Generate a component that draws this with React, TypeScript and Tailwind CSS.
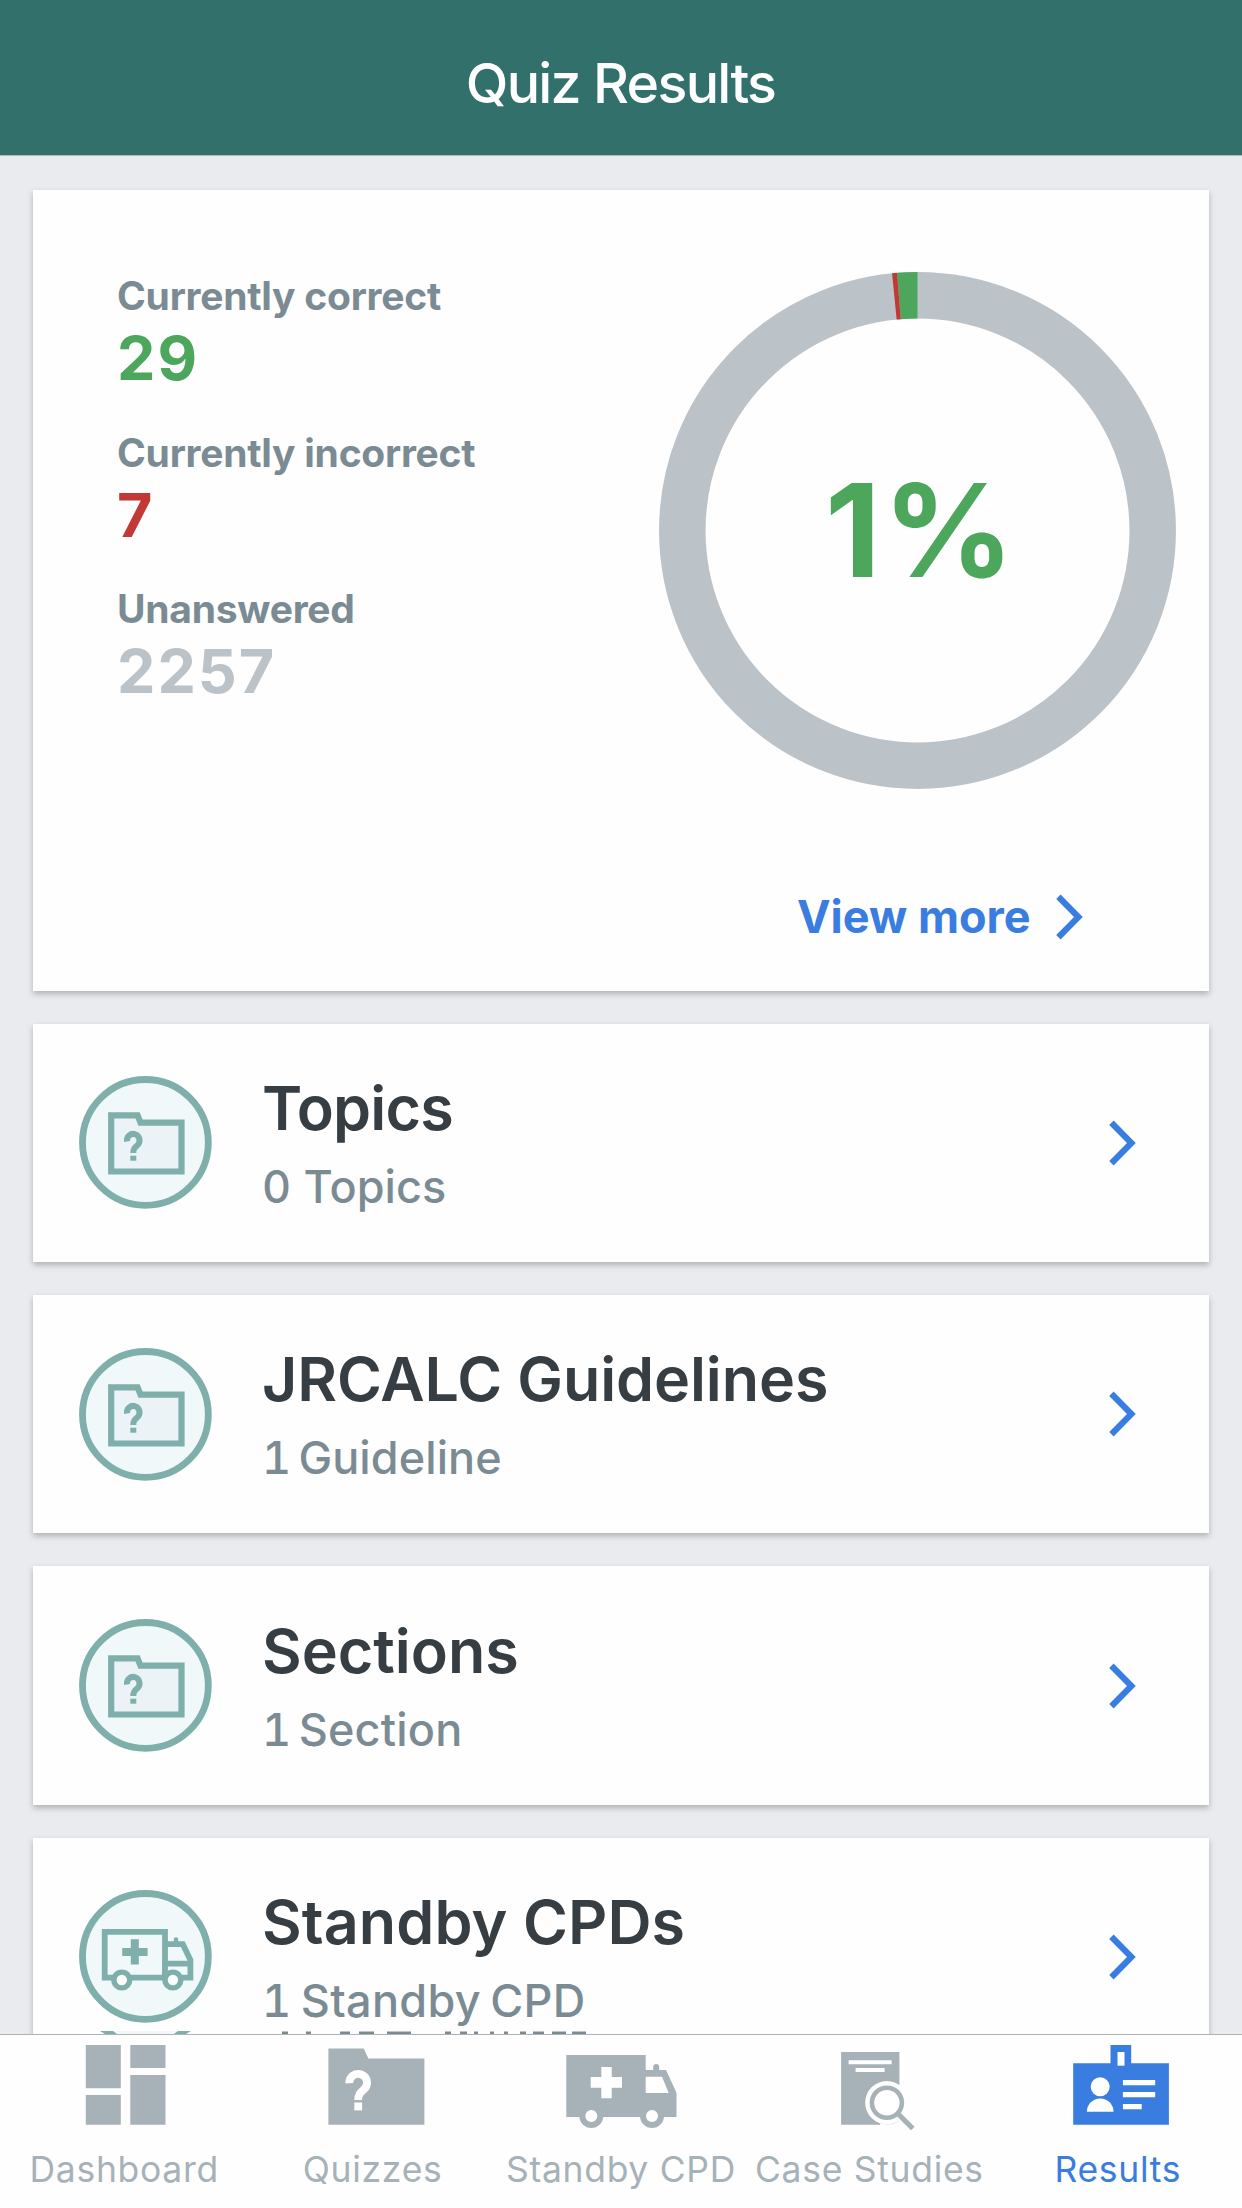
import type { ReactNode } from 'react'

interface Row {
  title: string
  titleClass: string
  count: string
  countClass: string
  icon: ReactNode
}

interface Tab {
  label: string
  active?: boolean
  icon: ReactNode
}

const FolderBadge = () => (
  <svg width="133" height="133" viewBox="0 0 133 133" fill="none" stroke="#7fafab">
    <circle cx="66.4" cy="66.4" r="62.9" fill="#f0f8f9" strokeWidth="6.8" />
    <path d="M32.2 39.4H58.6L61.5 46.7H102.5V95.5H32.2Z" fill="#ebf3f7" strokeWidth="6.2" />
    <path d="M48 65.5a6.3 6.5 0 1 1 10.6 3.6c-2.6 2.2-4.3 3.5-4.3 8" strokeWidth="6" />
    <path d="M54.3 79.7v5" strokeWidth="6" />
  </svg>
)

const AmbulanceBadge = () => (
  <svg width="133" height="133" viewBox="0 0 133 133" fill="none" stroke="#7fafab">
    <circle cx="66.4" cy="66.4" r="62.9" fill="#f0f8f9" strokeWidth="6.8" />
    <path d="M25.7 41.8H86V87.7H25.7Z" strokeWidth="5.8" />
    <path d="M86 54.2H103.8L111.4 70V87.7H86V73.6H111.4" fill="#f0f8f9" strokeWidth="5.8" />
    <path d="M97 54v-4.5" strokeWidth="4.4" strokeLinecap="round" />
    <path d="M43.2 62H68.6M55.8 49.3V74.6" strokeWidth="8" />
    <circle cx="42.8" cy="90" r="7.9" fill="#fff" strokeWidth="5.4" />
    <circle cx="93.9" cy="90" r="7.9" fill="#fff" strokeWidth="5.4" />
  </svg>
)

const Chevron = () => (
  <svg width="27" height="46" viewBox="0 0 27 46" fill="none" stroke="#3a7de1" strokeWidth="6.2">
    <path d="M2.4 2.8L22.4 23L2.4 43.2" />
  </svg>
)

const ROWS: Row[] = [
  { title: 'Topics', titleClass: 'tracking-[-0.8px]', count: '0 Topics', countClass: 'tracking-[0.1px]', icon: <FolderBadge /> },
  { title: 'JRCALC Guidelines', titleClass: 'tracking-[-0.1px]', count: '1 Guideline', countClass: 'tracking-[0.1px] [word-spacing:-5px]', icon: <FolderBadge /> },
  { title: 'Sections', titleClass: 'tracking-[0px]', count: '1 Section', countClass: 'tracking-[0.2px] [word-spacing:-5px]', icon: <FolderBadge /> },
  { title: 'Standby CPDs', titleClass: 'tracking-[0.1px]', count: '1 Standby CPD', countClass: 'tracking-[0.3px] [word-spacing:-3px]', icon: <AmbulanceBadge /> },
]

const STATS = [
  { label: 'Currently correct', value: 29, color: 'text-[#4ca75c]' },
  { label: 'Currently incorrect', value: 7, color: 'text-[#c23835]' },
  { label: 'Unanswered', value: 2257, color: 'text-[#bbc2c8]' },
]

const TABS: Tab[] = [
  {
    label: 'Dashboard',
    icon: (
      <path d="M23.8 5h35v43.3h-35zM23.8 55h35v29.7h-35zM68.3 5h35.2v23h-35.2zM68.3 35h35.2v49.7h-35.2z" />
    ),
  },
  {
    label: 'Quizzes',
    icon: (
      <>
        <path d="M17.4 8.6H52.7L57.4 18.4H113.4V84.7H17.4Z" />
        <g fill="none" stroke="#fff" strokeWidth="7.8">
          <path d="M38.3 43.3a8.9 8.8 0 1 1 14.6 6.2c-3.6 3.2-5.7 4.8-5.7 10.6" />
          <path d="M47.2 62.5v7.9" />
        </g>
      </>
    ),
  },
  {
    label: 'Standby CPD',
    icon: (
      <>
        <path d="M7.3 15H86.7V30H107L117.5 52.7V77H7.3Z" />
        <path d="M97.2 32v-5" stroke="currentColor" strokeWidth="6" strokeLinecap="round" />
        <path d="M86.7 36.7H103L109.7 53H86.7Z" fill="#fff" />
        <path d="M42.3 27h10.4v10h10.3v10.7h-10.3v10.6h-10.4v-10.6h-10.6v-10.7h10.6z" fill="#fff" />
        <circle cx="32.3" cy="76" r="9" fill="#fff" stroke="currentColor" strokeWidth="6" />
        <circle cx="93" cy="76" r="9" fill="#fff" stroke="currentColor" strokeWidth="6" />
      </>
    ),
  },
  {
    label: 'Case Studies',
    icon: (
      <>
        <path d="M34.1 12H92.4V84.7H34.1Z" />
        <path d="M41.6 22.3H84.6M48.6 29.9H77.6" stroke="#fff" strokeWidth="4" />
        <circle cx="79.9" cy="62.7" r="21.7" fill="#fff" />
        <path d="M73 83.2a21.7 21.7 0 0 0 20 -38v41H73z" fill="#fff" />
        <circle cx="79.9" cy="62.7" r="15" fill="#fff" stroke="currentColor" strokeWidth="4.6" />
        <path d="M91 73.8L105.8 88.6" stroke="currentColor" strokeWidth="5" />
      </>
    ),
  },
  {
    label: 'Results',
    active: true,
    icon: (
      <>
        <path d="M17.2 23.3H54.5V5H75.2V23.3H112.9V84.7H17.2Z" />
        <g fill="#fff">
          <path d="M61.5 12h7v13.7h-7z" />
          <circle cx="44.2" cy="46.7" r="9.5" />
          <path d="M30.9 71.7a13.3 13.3 0 0 1 26.6 0z" />
          <path d="M66.9 40h32.3v5.3h-32.3zM66.9 52h32.3v5.3h-32.3zM66.9 64h18.8v5.3h-18.8z" />
        </g>
      </>
    ),
  },
]

// [start, width] of each visible stub of the row that sits behind the tab bar
const STUBS = [
  [282, 6], [306, 5], [340, 10], [359, 15], [387, 24], [445, 6], [460, 7],
  [474, 4], [490, 4], [504, 4], [520, 6], [533, 11], [552, 14], [572, 14],
]

function Donut() {
  const r = 235.2
  const length = 2 * Math.PI * r
  const total = 29 + 7 + 2257
  const correct = (29 / total) * length
  const incorrect = (7 / total) * length

  return (
    <svg width="517" height="518" viewBox="0 0 517 518" fill="none" strokeWidth="46.5">
      <circle cx="258.5" cy="258.5" r={r} stroke="#bbc2c8" />
      {/* slices run anticlockwise from twelve o'clock */}
      <g transform="rotate(-90 258.5 258.5) translate(0 517) scale(1 -1)">
        <circle cx="258.5" cy="258.5" r={r} stroke="#4ca75c" strokeDasharray={`${correct} ${length}`} />
        <circle cx="258.5" cy="258.5" r={r} stroke="#c23835" strokeDasharray={`${incorrect} ${length}`} strokeDashoffset={-correct} />
      </g>
      <text x="166" y="305" fill="#4ca75c" fontSize="129" fontWeight="700" letterSpacing="2.4">
        1%
      </text>
    </svg>
  )
}

function ResultRow({ row }: { row: Row }) {
  return (
    <button className="h-[238.4px] w-full shrink-0 bg-[#fefefe] flex items-center pl-[46px] pr-[73px] text-left shadow-[0_3px_6px_rgba(0,0,0,0.25)]">
      <span className="shrink-0">{row.icon}</span>
      <span className="flex-1 flex flex-col gap-[15px] pb-px pl-[50px] whitespace-nowrap">
        <span className={`text-[61px] leading-[74px] font-semibold text-[#363e43] ${row.titleClass}`}>{row.title}</span>
        <span className={`text-[45px] leading-[54px] font-[450] text-[#7b8b94] tabular-nums ${row.countClass}`}>{row.count}</span>
      </span>
      <Chevron />
    </button>
  )
}

export default function App() {
  return (
    <div className="w-[1242px] h-[2208px] flex flex-col bg-[#e9ebee] overflow-hidden font-['Inter','Liberation_Sans',sans-serif]">
      <header className="h-[156px] shrink-0 bg-[#32706b] border-b border-[#b9b5b7] pt-[53px] pr-px">
        <h1 className="text-center text-[55.5px] leading-[60px] font-[550] tracking-[-1.7px] text-white">Quiz Results</h1>
      </header>

      <main className="relative flex-1 min-h-0 overflow-hidden px-[33px] pt-[34px] flex flex-col gap-[33px]">
        <section className="h-[800.6px] shrink-0 bg-[#fefefe] flex justify-between pl-[84px] pr-[33px] shadow-[0_3px_6px_rgba(0,0,0,0.25)]">
          <dl className="pt-[76px] flex flex-col gap-[32.7px]">
            {STATS.map(({ label, value, color }) => (
              <div key={label}>
                <dt className="text-[39px] leading-[60px] font-bold tracking-[-0.25px] text-[#7b8b94]">{label}</dt>
                <dd className={`text-[61px] leading-[64px] font-bold tracking-[2px] ${color}`}>{value}</dd>
              </div>
            ))}
          </dl>
          <div className="pt-[81.5px] flex flex-col">
            <Donut />
            <button className="mt-[100px] ml-[138px] flex items-center gap-[25px] text-[#3a7de1]">
              <span className="text-[45px] leading-[54px] font-bold">View more</span>
              <Chevron />
            </button>
          </div>
        </section>

        {ROWS.map((row) => (
          <ResultRow key={row.title} row={row} />
        ))}

        <svg className="absolute left-0 bottom-0" width="1242" height="3" viewBox="0 0 1242 3">
          <path d="M104 0H187V3H104Z" fill="#f0f8f9" />
          <path d="M100 0h13l4 3h-12zM178 0h13l-5 3h-12z" fill="#7fafab" />
          {STUBS.map(([x, width]) => (
            <rect key={x} x={x} y="0.5" width={width} height="2.5" fill="#7b8b94" />
          ))}
        </svg>
      </main>

      <nav className="h-[174px] shrink-0 bg-[#fefefe] border-t border-[#b2b2b2] grid grid-cols-5 pt-[5px]">
        {TABS.map(({ label, active, icon }) => (
          <button key={label} className={`flex flex-col items-center gap-[18px] ${active ? 'text-[#3a7de1]' : 'text-[#a7b2b8]'}`}>
            <svg width="124" height="90" viewBox="0 0 124 90" fill="currentColor">
              {icon}
            </svg>
            <span className="text-[35.5px] leading-[44px] tracking-[0.7px] whitespace-nowrap">{label}</span>
          </button>
        ))}
      </nav>
    </div>
  )
}
